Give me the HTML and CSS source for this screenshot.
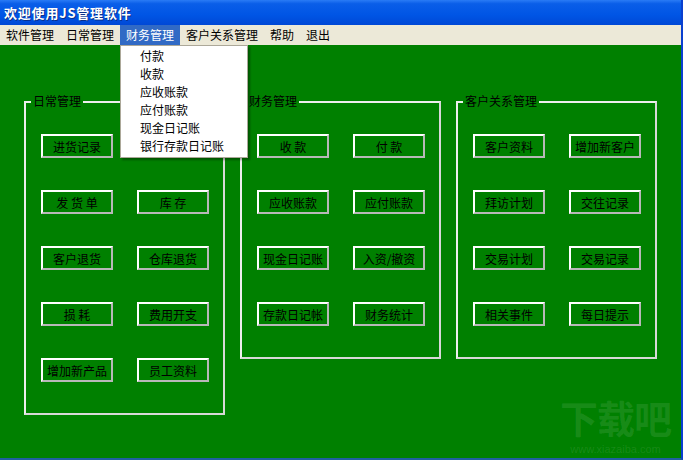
FILE: index.html
```html
<!DOCTYPE html>
<html lang="zh-CN">
<head>
    <meta charset="UTF-8">
    <title>欢迎使用JS管理软件</title>
    <link rel="stylesheet" href="styles.css">
</head>
<body>
    <div class="window">
        <div class="titlebar">欢迎使用JS管理软件</div>

        <div class="menubar">
            <span class="menu-item">软件管理</span>
            <span class="menu-item">日常管理</span>
            <span class="menu-item active">财务管理</span>
            <span class="menu-item">客户关系管理</span>
            <span class="menu-item">帮助</span>
            <span class="menu-item">退出</span>
        </div>

        <div class="client">
            <div class="group">
                <span class="group-label">日常管理</span>
                <div class="buttons">
                    <div class="btn">进货记录</div>
                    <div class="btn-slot"></div>
                    <div class="btn">发 货 单</div>
                    <div class="btn">库 存</div>
                    <div class="btn">客户退货</div>
                    <div class="btn">仓库退货</div>
                    <div class="btn">损 耗</div>
                    <div class="btn">费用开支</div>
                    <div class="btn">增加新产品</div>
                    <div class="btn">员工资料</div>
                </div>
            </div>

            <div class="group">
                <span class="group-label">财务管理</span>
                <div class="buttons">
                    <div class="btn">收 款</div>
                    <div class="btn">付 款</div>
                    <div class="btn">应收账款</div>
                    <div class="btn">应付账款</div>
                    <div class="btn">现金日记账</div>
                    <div class="btn">入资/撤资</div>
                    <div class="btn">存款日记帐</div>
                    <div class="btn">财务统计</div>
                </div>
            </div>

            <div class="group">
                <span class="group-label">客户关系管理</span>
                <div class="buttons">
                    <div class="btn">客户资料</div>
                    <div class="btn">增加新客户</div>
                    <div class="btn">拜访计划</div>
                    <div class="btn">交往记录</div>
                    <div class="btn">交易计划</div>
                    <div class="btn">交易记录</div>
                    <div class="btn">相关事件</div>
                    <div class="btn">每日提示</div>
                </div>
            </div>

            <!-- watermark of the screenshot source -->
            <div class="watermark">
                <div class="wm-logo">下载吧</div>
                <div class="wm-url">www.xiazaiba.com</div>
            </div>
        </div>

        <!-- open dropdown of 财务管理 -->
        <ul class="dropdown">
            <li>付款</li>
            <li>收款</li>
            <li>应收账款</li>
            <li>应付账款</li>
            <li>现金日记账</li>
            <li>银行存款日记账</li>
        </ul>
    </div>
</body>
</html>
```

FILE: styles.css
```css
body {
    margin: 0;
    padding: 0;
    font-family: "Noto Sans CJK SC", "Liberation Sans", sans-serif;
    font-size: 12px;
}
.window {
    position: relative;
    width: 683px;
    height: 460px;
    box-sizing: border-box;
    border-right: 2px solid #0a3fcf;
    border-bottom: 2px solid #1f5f9f;
    display: flex;
    flex-direction: column;
    overflow: hidden;
}
.titlebar {
    height: 25px;
    line-height: 25px;
    padding-left: 4px;
    background: linear-gradient(#2a7bf5 0%, #0a5ee8 15%, #0055e5 60%, #0048d6 100%);
    color: white;
    font-weight: bold;
    font-size: 13px;
    letter-spacing: 0.8px;
    text-shadow: 1px 1px 0 #0a2f8a;
}
.menubar {
    height: 20px;
    background: #ece9d8;
    display: flex;
}
.menu-item {
    padding: 0 6px;
    line-height: 20px;
    color: #000;
}
.menu-item.active {
    background: #316ac5;
    color: white;
}
.client {
    position: relative;
    flex: 1;
    background: #008000;
    display: flex;
    align-items: flex-start;
    gap: 15px;
    padding: 56px 0 0 24px;
}
.group {
    position: relative;
    width: 201px;
    box-sizing: border-box;
    border: 2px solid #eeeeee;
    border-right-color: #d8d8d8;
    border-bottom-color: #d8d8d8;
}
.group-label {
    position: absolute;
    top: -10px;
    left: 5px;
    padding: 0 2px;
    background: #008000;
    color: #000;
    line-height: 16px;
}
.buttons {
    display: grid;
    grid-template-columns: 72px 72px;
    grid-auto-rows: 24px;
    column-gap: 24px;
    row-gap: 32px;
    padding: 31px 16px 31px 15px;
}
.btn {
    box-sizing: border-box;
    border: 2px solid;
    border-color: #ffffff #b8b8b8 #b8b8b8 #ffffff;
    display: flex;
    align-items: center;
    justify-content: center;
    color: #000;
    white-space: nowrap;
    font-size: 12px;
}
.dropdown {
    position: absolute;
    top: 45px;
    left: 120px;
    width: 128px;
    height: 113px;
    box-sizing: border-box;
    margin: 0;
    padding: 1px 0 0 19px;
    list-style: none;
    background: white;
    border: 1px solid #aca899;
    box-shadow: 2px 2px 2px rgba(0,0,0,0.35);
}
.dropdown li {
    line-height: 18px;
    color: #000;
}
.watermark {
    position: absolute;
    right: 10px;
    bottom: 3px;
    color: rgba(255,255,255,0.1);
    text-align: center;
}
.wm-logo {
    font-size: 38px;
    font-weight: bold;
    line-height: 40px;
    letter-spacing: -1px;
    margin-bottom: 6px;
}
.wm-url {
    font-family: "Liberation Sans", sans-serif;
    font-size: 11px;
    line-height: 12px;
}
```
